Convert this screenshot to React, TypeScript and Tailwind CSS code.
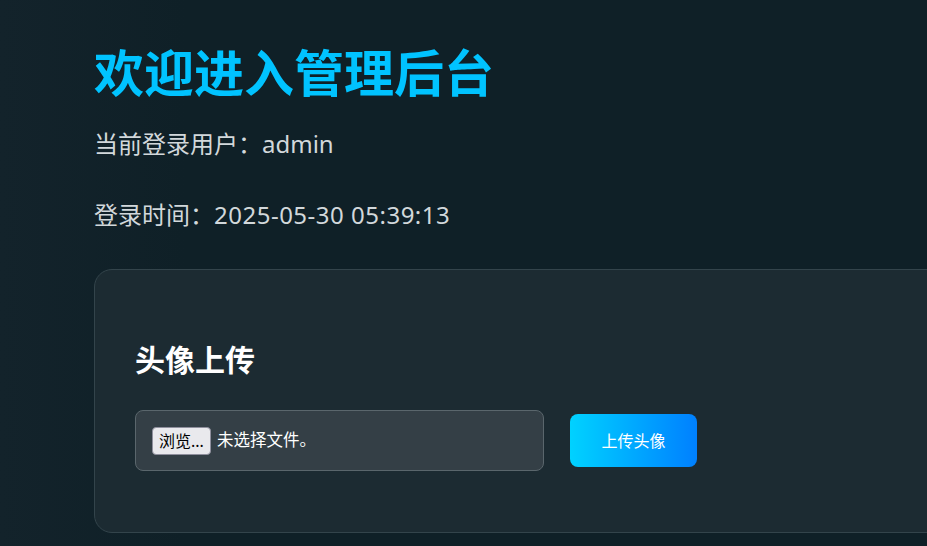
export default function App() {
  return (
    <div
      className="min-h-[546px] w-full overflow-hidden bg-[linear-gradient(90deg,#13232b_0%,#0f2027_20%,#0f2027_100%)] pl-[94px] pt-[38px] text-[#d2d8db]"
      style={{ fontFamily: '"Noto Sans", "Noto Sans CJK SC", sans-serif' }}
    >
      <h1 className="text-[50px] font-bold leading-[70px] text-[#00c3ff]">欢迎进入管理后台</h1>
      <p className="mt-[20px] text-[24px] leading-[32px]">当前登录用户：admin</p>
      <p className="mt-[39px] text-[24px] leading-[32px]">
        登录时间：<span className="tracking-[0.5px]">2025-05-30 05:39:13</span>
      </p>

      <div className="mt-[38px] w-[900px] rounded-[18px] border border-[#33444b] bg-[#1c2b32] px-[40px] pb-[61px] pt-[70px]">
        <h2 className="text-[30px] font-bold leading-[40px] text-white">头像上传</h2>
        <div className="mt-[30px] flex items-center gap-[26px]">
          <div className="flex h-[61px] w-[409px] items-center gap-[6px] rounded-[8px] border border-[#5a666c] bg-[#343f46] px-[16px]">
            <span className="flex h-[28px] items-center rounded-[4px] border border-[#8f8f9d] bg-[#e9e9ed] px-[6px] text-[16px] text-black">
              浏览...
            </span>
            <span className="text-[16.5px] text-white">未选择文件。</span>
          </div>
          <button className="h-[53px] w-[127px] rounded-[8px] bg-[linear-gradient(90deg,#00d2ff,#0080ff)] text-[16px] text-white">
            上传头像
          </button>
        </div>
      </div>
    </div>
  );
}
